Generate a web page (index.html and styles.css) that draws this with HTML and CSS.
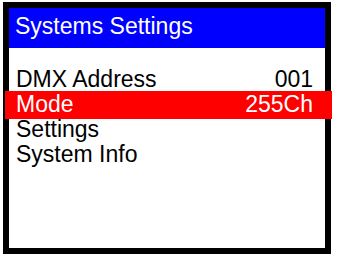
FILE: index.html
```html
<!DOCTYPE html>
<html lang="en">
<head>
    <meta charset="UTF-8">
    <meta name="viewport" content="width=device-width, initial-scale=1.0">
    <title>Systems Settings</title>
    <link rel="stylesheet" href="styles.css">
</head>
<body>
    <div class="screen">
        <div class="title">Systems Settings</div>
        <ul class="menu">
            <li class="item"><span>DMX Address</span><span>001</span></li>
            <li class="item selected"><span>Mode</span><span>255Ch</span></li>
            <li class="item"><span>Settings</span></li>
            <li class="item"><span>System Info</span></li>
        </ul>
    </div>
</body>
</html>
```

FILE: styles.css
```css
body { margin: 0; background: #fff; font-family: "Liberation Sans", Arial, sans-serif; }
.screen { box-sizing: border-box; width: 328px; height: 252px; margin: 2px 0 0 3px; border: 6px solid #000; background: #fff; }
.title { height: 40px; line-height: 36px; padding-left: 6px; background: #0000ff; color: #fff; font-size: 23px; }
.menu { list-style: none; margin: 0; padding: 19px 0 0 0; }
.item { display: flex; justify-content: space-between; height: 25px; line-height: 25px; padding: 0 12px 0 7px; font-size: 23px; color: #000; }
.selected { position: relative; background: #ff0000; color: #fff; height: 28px; line-height: 26px; margin: -1px -7px -2px -4px; padding: 0 19px 0 11px; }
```
